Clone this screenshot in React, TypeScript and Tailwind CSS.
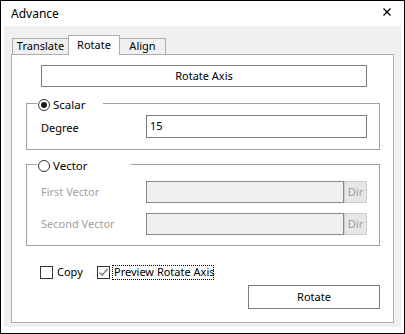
import React from "react";

const font = { fontFamily: '"Noto Sans", "Open Sans", sans-serif' };

const Radio = ({ checked }: { checked?: boolean }) => (
  <div className="w-[12px] h-[12px] rounded-full border border-[#333333] bg-white flex items-center justify-center shrink-0">
    {checked && <div className="w-[6px] h-[6px] rounded-full bg-[#1a1a1a]" />}
  </div>
);

const Group = ({
  label,
  legendW,
  checked,
  className,
  children,
}: {
  label: string;
  legendW: string;
  checked?: boolean;
  className: string;
  children: React.ReactNode;
}) => (
  <div className={`relative ml-[14px] w-[354px] border border-[#a0a0a0] ${className}`}>
    <div className={`absolute left-[10px] top-[-6px] h-[14px] ${legendW} bg-white flex items-center pl-[1px]`}>
      <Radio checked={checked} />
      <span className="ml-[3px] text-black leading-none text-[11.5px]">{label}</span>
    </div>
    {children}
  </div>
);

const VectorRow = ({ label }: { label: string }) => (
  <div className="flex items-center">
    <span className="w-[105px] text-[#a0a0a0] pt-[1px]">{label}</span>
    <div className="w-[198px] h-[22px] border border-[#8a8a8a] bg-[#f0f0f0]" />
    <div className="w-[23px] h-[22px] border border-[#cccccc] bg-[#e6e6e6] flex items-center justify-center text-[#a0a0a0]">
      Dir
    </div>
  </div>
);

export default function App() {
  return (
    <div
      style={font}
      className="w-[405px] h-[334px] border border-black bg-white flex flex-col text-[11px] text-black"
    >
      {/* title bar */}
      <div className="h-[25px] flex items-center justify-between pl-[10px] pr-[13px]">
        <span className="text-[12px] pt-[1px]">Advance</span>
        <svg width="8" height="8" viewBox="0 0 8 8" className="mb-[4px]">
          <path d="M0.5 0.5 L7.5 7.5 M7.5 0.5 L0.5 7.5" stroke="#000" strokeWidth="1.3" />
        </svg>
      </div>

      {/* body */}
      <div className="mx-[3px] h-[301px] bg-[#f0f0f0] pt-[9px] px-[7px]">
        {/* tabs */}
        <div className="h-[19px] flex items-end">
          <div className="ml-[1px] w-[57px] h-[16px] border border-b-0 border-[#adadad] bg-[#f0f0f0] flex items-center justify-center">
            Translate
          </div>
          <div className="relative z-10 -ml-px -mb-px w-[52px] h-[20px] border border-b-0 border-[#adadad] bg-white flex items-center justify-center pb-[1px]">
            Rotate
          </div>
          <div className="-ml-px w-[47px] h-[16px] border border-b-0 border-[#adadad] bg-[#f0f0f0] flex items-center justify-center">
            Align
          </div>
        </div>

        {/* panel */}
        <div className="h-[269px] border border-[#adadad] bg-white flex flex-col">
          <div className="mt-[10px] ml-[29px] w-[326px] h-[22px] border border-[#7a7a7a] bg-white flex items-center justify-center">
            Rotate Axis
          </div>

          <Group label="Scalar" legendW="w-[66px]" checked className="mt-[16px] pt-[11px] pb-[11px] pl-[14px]">
            <div className="flex items-center">
              <span className="w-[105px] pt-[3px]">Degree</span>
              <div className="w-[221px] h-[23px] border border-[#7a7a7a] bg-white flex items-center pl-[3px]">
                15
              </div>
            </div>
          </Group>

          <Group label="Vector" legendW="w-[94px]" className="mt-[14px] pt-[16px] pb-[10px] pl-[14px] flex flex-col gap-[10px]">
            <VectorRow label="First Vector" />
            <VectorRow label="Second Vector" />
          </Group>

          {/* checkboxes */}
          <div className="mt-[19px] h-[15px] flex items-center ml-[28px]">
            <div className="w-[57px] flex items-center">
              <div className="w-[13px] h-[13px] border border-[#333333] bg-white" />
              <span className="ml-[4px]">Copy</span>
            </div>
            <div className="w-[13px] h-[13px] border border-[#333333] bg-white flex items-center justify-center">
              <svg width="11" height="11" viewBox="0 0 11 11">
                <path d="M1.5 5.5 L4.2 8.2 L9.5 2" fill="none" stroke="#6e6e6e" strokeWidth="1.2" />
              </svg>
            </div>
            <div className="ml-[2px] h-[15px] w-[102px] border border-dotted border-black flex items-center px-[1px] whitespace-nowrap">
              Preview Rotate Axis
            </div>
          </div>

          <div className="mt-[5px] self-end mr-[13px] w-[132px] h-[24px] border border-[#7a7a7a] bg-white flex items-center justify-center">
            Rotate
          </div>
        </div>
      </div>
    </div>
  );
}
